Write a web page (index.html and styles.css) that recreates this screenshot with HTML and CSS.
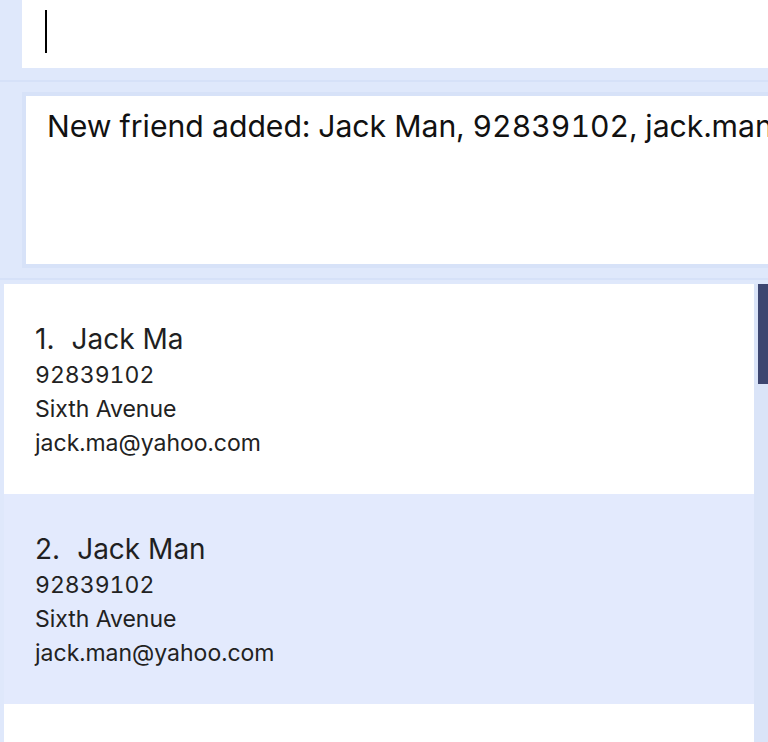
FILE: index.html
```html
<!DOCTYPE html>
<html>
<head>
<meta charset="utf-8">
<link rel="stylesheet" href="styles.css">
</head>
<body>
<div class="app">
  <div class="command-pane">
    <div class="command-box"><span class="caret"></span></div>
  </div>
  <div class="divider"></div>
  <div class="result-pane">
    <div class="result-box">New friend added: Jack Man, 92839102, jack.man@yahoo.com</div>
  </div>
  <div class="divider"></div>
  <div class="list-pane">
    <div class="list">
      <div class="card">
        <div class="name"><span class="index">1.</span>Jack Ma</div>
        <div class="field">92839102</div>
        <div class="field">Sixth Avenue</div>
        <div class="field">jack.ma@yahoo.com</div>
      </div>
      <div class="card alt">
        <div class="name"><span class="index">2.</span>Jack Man</div>
        <div class="field">92839102</div>
        <div class="field">Sixth Avenue</div>
        <div class="field">jack.man@yahoo.com</div>
      </div>
      <div class="card"></div>
    </div>
    <div class="scroll-track"><div class="scroll-thumb"></div></div>
  </div>
</div>
</body>
</html>
```
FILE: styles.css
```css
html, body {
  margin: 0;
  padding: 0;
  height: 100%;
  overflow: hidden;
}
body {
  background: #dfe8fb;
  font-family: Inter, "Noto Sans", sans-serif;
  color: #1f1f22;
}
.app {
  width: 768px;
  height: 742px;
  display: flex;
  flex-direction: column;
  overflow: hidden;
}
.command-pane {
  padding: 0 0 12px 22px;
}
.command-box {
  background: #ffffff;
  height: 68px;
  padding: 10px 0 0 23px;
  box-sizing: border-box;
}
.caret {
  display: block;
  width: 2px;
  height: 43px;
  background: #000;
}
.divider {
  height: 2px;
  background: #d6e1f8;
}
.result-pane {
  padding: 10px 0 10px 22px;
}
.result-box {
  background: #ffffff;
  border: 4px solid #d7e2f8;
  border-right: none;
  height: 176px;
  box-sizing: border-box;
  padding: 11px 0 0 21px;
  font-size: 30.2px;
  line-height: 38px;
  font-variant-numeric: tabular-nums;
  white-space: nowrap;
  overflow: hidden;
  color: #111;
}
.list-pane {
  padding: 4px 0 0 4px;
  display: flex;
  flex: 1;
  min-height: 0;
}
.list {
  width: 750px;
  overflow: hidden;
}
.card {
  background: #ffffff;
  height: 210px;
  box-sizing: border-box;
  padding: 36px 0 0 31px;
}
.card.alt {
  background: #e3eafd;
}
.name {
  font-size: 28px;
  line-height: 38px;
  color: #1f1f22;
}
.index {
  margin-right: 17px;
}
.field {
  font-size: 23px;
  line-height: 34px;
  color: #222;
  font-variant-numeric: tabular-nums;
}
.scroll-track {
  width: 14px;
  background: #dae4f8;
  padding-left: 4px;
  box-sizing: border-box;
}
.scroll-thumb {
  height: 100px;
  background: #3d4670;
}
```
